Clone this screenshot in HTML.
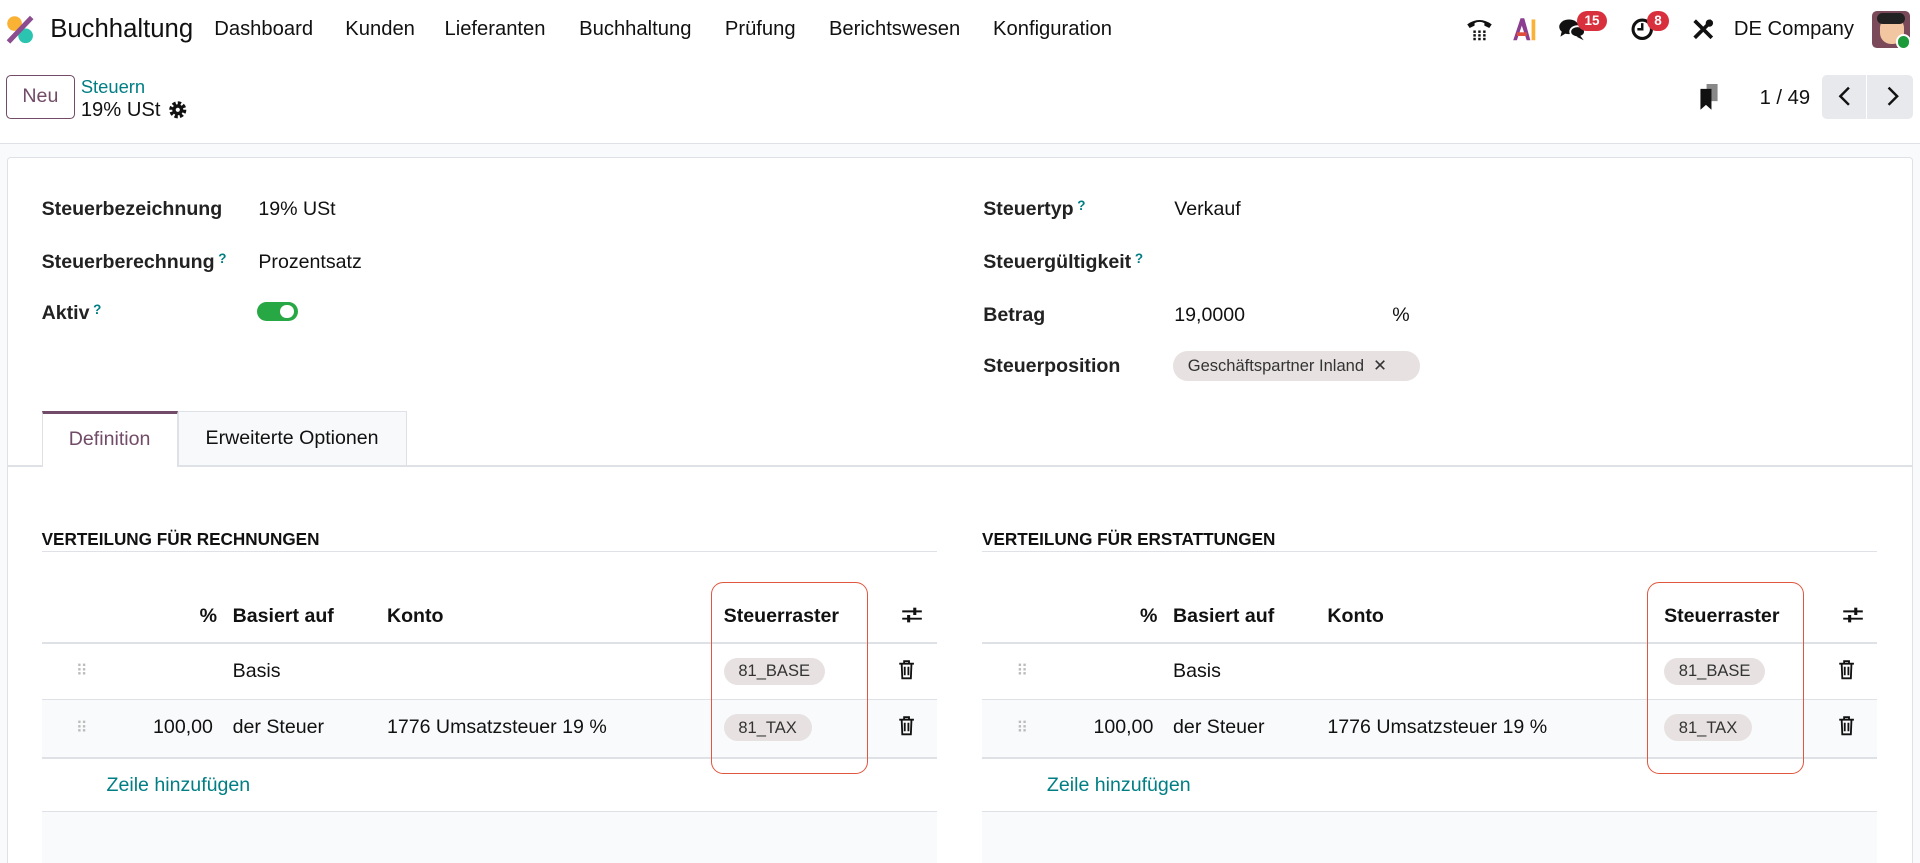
<!DOCTYPE html>
<html><head><meta charset="utf-8"><style>
*{box-sizing:border-box;margin:0;padding:0}
html,body{width:1920px;height:863px;overflow:hidden;background:#fff}
#w{zoom:1.22449;width:1568px;height:705px;position:relative;font-family:"Liberation Sans",sans-serif;color:#111;font-size:16px}
.a{position:absolute;white-space:nowrap}
.m{top:15px;font-size:16.5px}
.lbl{font-weight:bold;font-size:16px;color:#222}
.q{color:#017e84;font-size:11px;font-weight:bold;vertical-align:top;margin-left:3px}
.badge{background:#d9303e;color:#fff;font-size:11px;font-weight:bold;border-radius:9px;padding:2px 6px;top:9px}
.tag{background:#e7e1e1;border-radius:12px;font-size:13.5px;color:#333}
.hl{height:1px;background:#dee2e6}
.th{font-weight:bold;font-size:16px;top:494px}
.dh{color:#bbb;font-size:13px}
</style></head><body><div id="w">
<svg class="a" style="left:5px;top:12px" width="24" height="24" viewBox="0 0 24 24"><circle cx="7" cy="7" r="6" fill="#f9b233"/><circle cx="16" cy="17" r="6" fill="#2bc4b0"/><path d="M2 22 L21 2" stroke="#8b4d8f" stroke-width="4"/></svg>
<div class="a" style="left:41px;top:12px;font-size:21px">Buchhaltung</div>
<div class="a m" style="left:175px">Dashboard</div>
<div class="a m" style="left:282px">Kunden</div>
<div class="a m" style="left:363px">Lieferanten</div>
<div class="a m" style="left:473px">Buchhaltung</div>
<div class="a m" style="left:592px">Prüfung</div>
<div class="a m" style="left:677px">Berichtswesen</div>
<div class="a m" style="left:811px">Konfiguration</div>
<svg class="a" style="left:1197px;top:14px" width="22" height="20" viewBox="0 0 22 20"><path d="M1 6 Q11 -1 21 6 L19 9 L15 7 L15 5 Q11 3 7 5 L7 7 L3 9Z" fill="#111"/><g fill="#111"><rect x="6" y="11" width="2" height="2"/><rect x="10" y="11" width="2" height="2"/><rect x="14" y="11" width="2" height="2"/><rect x="6" y="14" width="2" height="2"/><rect x="10" y="14" width="2" height="2"/><rect x="14" y="14" width="2" height="2"/><rect x="6" y="17" width="2" height="2"/><rect x="10" y="17" width="2" height="2"/><rect x="14" y="17" width="2" height="2"/></g></svg>
<svg class="a" style="left:1235px;top:14px" width="22" height="20" viewBox="0 0 22 20"><path d="M1 19 L7 1 L10 1 L15 19 L12 19 L8 7 L4 19Z" fill="#8b3d8f"/><path d="M4 14 L12 14" stroke="#e04d3b" stroke-width="3"/><rect x="16" y="2" width="3" height="17" fill="#f9b233"/></svg>
<svg class="a" style="left:1272px;top:14px" width="24" height="20" viewBox="0 0 24 20"><ellipse cx="9" cy="8" rx="8" ry="6" fill="#111"/><path d="M3 12 L2 16 L7 13Z" fill="#111"/><ellipse cx="16" cy="12" rx="6" ry="4.5" fill="#111" stroke="#fff" stroke-width="1.5"/><path d="M18 15 L21 19 L15 16Z" fill="#111"/></svg>
<div class="a badge" style="left:1288px">15</div>
<svg class="a" style="left:1331px;top:14px" width="20" height="20" viewBox="0 0 20 20"><circle cx="10" cy="10" r="7.5" fill="none" stroke="#111" stroke-width="2.5"/><path d="M10 5 V10 H6" stroke="#111" stroke-width="2" fill="none"/></svg>
<div class="a badge" style="left:1345px">8</div>
<svg class="a" style="left:1381px;top:14px" width="20" height="20" viewBox="0 0 20 20"><path d="M3 3 L17 17 M17 3 L3 17" stroke="#111" stroke-width="3"/><circle cx="15" cy="5" r="3" fill="#111"/></svg>
<div class="a" style="left:1416px;top:15px;font-size:16.5px">DE Company</div>
<div class="a" style="left:1529px;top:9px;width:31px;height:30px;border-radius:4px;background:#7a4a5a;overflow:hidden"><div class="a" style="left:6px;top:5px;width:20px;height:22px;border-radius:9px;background:#f2c6a0"></div><div class="a" style="left:4px;top:2px;width:23px;height:9px;border-radius:5px;background:#222"></div></div>
<div class="a" style="left:1548px;top:28px;width:13px;height:13px;border-radius:7px;background:#1c9a3a;border:2px solid #fff"></div>
<div class="a" style="left:5px;top:61px;width:56px;height:36px;border:1px solid #714b67;border-radius:4px;color:#714b67;font-size:16px;text-align:center;line-height:34px">Neu</div>
<div class="a" style="left:66px;top:62px;color:#017e84;font-size:15px">Steuern</div>
<div class="a" style="left:66px;top:81px;font-size:16.5px">19% USt</div>
<svg class="a" style="left:137px;top:82px" width="16" height="16" viewBox="0 0 16 16"><circle cx="8" cy="8" r="5" fill="none" stroke="#111" stroke-width="4" stroke-dasharray="2.4 1.5"/><circle cx="8" cy="8" r="4.5" fill="#111"/><circle cx="8" cy="8" r="1.7" fill="#fff"/></svg>
<svg class="a" style="left:1387px;top:69px" width="18" height="22" viewBox="0 0 18 22"><rect x="7" y="0" width="9" height="14" fill="#888"/><path d="M2 4 H11 V21 L6.5 17 L2 21Z" fill="#111"/></svg>
<div class="a" style="left:1437px;top:71px;font-size:16.5px">1 / 49</div>
<div class="a" style="left:1488px;top:61px;width:74px;height:36px;background:#e7e9ed;border-radius:4px"></div>
<div class="a" style="left:1524px;top:61px;width:1px;height:36px;background:#fff"></div>
<svg class="a" style="left:1497px;top:69px" width="20" height="20" viewBox="0 0 20 20"><path d="M13 3 L6 10 L13 17" stroke="#111" stroke-width="2" fill="none"/></svg>
<svg class="a" style="left:1535px;top:69px" width="20" height="20" viewBox="0 0 20 20"><path d="M7 3 L14 10 L7 17" stroke="#111" stroke-width="2" fill="none"/></svg>
<div class="a" style="left:0;top:117px;width:1568px;height:600px;background:#f9fafb;border-top:1px solid #dee2e6"></div>
<div class="a" style="left:6px;top:128px;width:1556px;height:600px;background:#fff;border:1px solid #dee2e6;border-radius:3px"></div>
<div class="a lbl" style="left:34px;top:162px">Steuerbezeichnung</div>
<div class="a" style="left:211px;top:162px">19% USt</div>
<div class="a lbl" style="left:34px;top:205px">Steuerberechnung<span class="q">?</span></div>
<div class="a" style="left:211px;top:205px">Prozentsatz</div>
<div class="a lbl" style="left:34px;top:247px">Aktiv<span class="q">?</span></div>
<div class="a" style="left:210px;top:247px;width:33px;height:15px;border-radius:8px;background:#28a745"></div>
<div class="a" style="left:229px;top:249px;width:11px;height:11px;border-radius:6px;background:#fff"></div>
<div class="a lbl" style="left:803px;top:162px">Steuertyp<span class="q">?</span></div>
<div class="a" style="left:959px;top:162px">Verkauf</div>
<div class="a lbl" style="left:803px;top:205px">Steuergültigkeit<span class="q">?</span></div>
<div class="a lbl" style="left:803px;top:248px">Betrag</div>
<div class="a" style="left:959px;top:248px">19,0000</div>
<div class="a" style="left:1137px;top:248px">%</div>
<div class="a lbl" style="left:803px;top:290px">Steuerposition</div>
<div class="a tag" style="left:958px;top:287px;width:202px;height:24px;line-height:24px;padding-left:12px">Geschäftspartner Inland&nbsp; ✕</div>
<div class="a hl" style="left:6px;top:380px;width:1556px"></div>
<div class="a" style="left:145px;top:336px;width:187px;height:44px;background:#f8f9fa;border:1px solid #dee2e6;border-bottom:none;text-align:center;line-height:44px;font-size:16px">Erweiterte Optionen</div>
<div class="a" style="left:34px;top:336px;width:111px;height:45px;background:#fff;border:1px solid #dee2e6;border-top:3px solid #714b67;border-bottom:none;text-align:center;line-height:42px;font-size:16px;color:#714b67">Definition</div>
<div class="a" style="left:0;top:0">
<div class="a" style="left:34px;top:432px;font-weight:bold;font-size:14px">VERTEILUNG FÜR RECHNUNGEN</div>
<div class="a hl" style="left:34px;top:450px;width:731px"></div>
<div class="a th" style="left:163px">%</div><div class="a th" style="left:190px">Basiert auf</div><div class="a th" style="left:316px">Konto</div><div class="a th" style="left:591px">Steuerraster</div>
<svg class="a" style="left:736px;top:493px" width="18" height="18" viewBox="0 0 18 18"><path d="M1 6 H17 M1 12 H17" stroke="#111" stroke-width="1.6"/><rect x="10" y="3" width="2.5" height="6" fill="#111"/><rect x="5" y="9" width="2.5" height="6" fill="#111"/></svg>
<div class="a hl" style="left:34px;top:524px;width:731px;height:2px"></div>
<div class="a" style="left:34px;top:572px;width:731px;height:46px;background:#f9fafb"></div>
<div class="a dh" style="left:62px;top:540px">⠿</div>
<div class="a" style="left:190px;top:539px">Basis</div>
<div class="a tag" style="left:591px;top:537px;padding:3px 12px">81_BASE</div>
<div class="a hl" style="left:34px;top:571px;width:731px"></div>
<div class="a dh" style="left:62px;top:586px">⠿</div>
<div class="a" style="left:125px;top:585px">100,00</div><div class="a" style="left:190px;top:585px">der Steuer</div><div class="a" style="left:316px;top:585px">1776 Umsatzsteuer 19 %</div>
<div class="a tag" style="left:591px;top:583px;padding:3px 12px">81_TAX</div>
<div class="a hl" style="left:34px;top:618px;width:731px;height:2px"></div>
<div class="a" style="left:87px;top:632px;color:#017e84">Zeile hinzufügen</div>
<div class="a hl" style="left:34px;top:662px;width:731px"></div>
<div class="a" style="left:34px;top:663px;width:731px;height:50px;background:#f9fafb"></div>
<div class="a" style="left:581px;top:475px;width:128px;height:157px;border:1.5px solid #e0573f;border-radius:10px"></div>
</div>
<div class="a" style="left:768px;top:0">
<div class="a" style="left:34px;top:432px;font-weight:bold;font-size:14px">VERTEILUNG FÜR ERSTATTUNGEN</div>
<div class="a hl" style="left:34px;top:450px;width:731px"></div>
<div class="a th" style="left:163px">%</div><div class="a th" style="left:190px">Basiert auf</div><div class="a th" style="left:316px">Konto</div><div class="a th" style="left:591px">Steuerraster</div>
<svg class="a" style="left:736px;top:493px" width="18" height="18" viewBox="0 0 18 18"><path d="M1 6 H17 M1 12 H17" stroke="#111" stroke-width="1.6"/><rect x="10" y="3" width="2.5" height="6" fill="#111"/><rect x="5" y="9" width="2.5" height="6" fill="#111"/></svg>
<div class="a hl" style="left:34px;top:524px;width:731px;height:2px"></div>
<div class="a" style="left:34px;top:572px;width:731px;height:46px;background:#f9fafb"></div>
<div class="a dh" style="left:62px;top:540px">⠿</div>
<div class="a" style="left:190px;top:539px">Basis</div>
<div class="a tag" style="left:591px;top:537px;padding:3px 12px">81_BASE</div>
<div class="a hl" style="left:34px;top:571px;width:731px"></div>
<div class="a dh" style="left:62px;top:586px">⠿</div>
<div class="a" style="left:125px;top:585px">100,00</div><div class="a" style="left:190px;top:585px">der Steuer</div><div class="a" style="left:316px;top:585px">1776 Umsatzsteuer 19 %</div>
<div class="a tag" style="left:591px;top:583px;padding:3px 12px">81_TAX</div>
<div class="a hl" style="left:34px;top:618px;width:731px;height:2px"></div>
<div class="a" style="left:87px;top:632px;color:#017e84">Zeile hinzufügen</div>
<div class="a hl" style="left:34px;top:662px;width:731px"></div>
<div class="a" style="left:34px;top:663px;width:731px;height:50px;background:#f9fafb"></div>
<div class="a" style="left:577px;top:475px;width:128px;height:157px;border:1.5px solid #e0573f;border-radius:10px"></div>
</div>
<svg class="a" style="left:733px;top:539px" width="14" height="16" viewBox="0 0 14 16"><path d="M1 3 H13 M5 3 V1 H9 V3 M3 3 L3.5 15 H10.5 L11 3 M5.5 5.5 V12.5 M8.5 5.5 V12.5" stroke="#111" stroke-width="1.5" fill="none"/></svg>
<svg class="a" style="left:733px;top:585px" width="14" height="16" viewBox="0 0 14 16"><path d="M1 3 H13 M5 3 V1 H9 V3 M3 3 L3.5 15 H10.5 L11 3 M5.5 5.5 V12.5 M8.5 5.5 V12.5" stroke="#111" stroke-width="1.5" fill="none"/></svg>
<svg class="a" style="left:1501px;top:539px" width="14" height="16" viewBox="0 0 14 16"><path d="M1 3 H13 M5 3 V1 H9 V3 M3 3 L3.5 15 H10.5 L11 3 M5.5 5.5 V12.5 M8.5 5.5 V12.5" stroke="#111" stroke-width="1.5" fill="none"/></svg>
<svg class="a" style="left:1501px;top:585px" width="14" height="16" viewBox="0 0 14 16"><path d="M1 3 H13 M5 3 V1 H9 V3 M3 3 L3.5 15 H10.5 L11 3 M5.5 5.5 V12.5 M8.5 5.5 V12.5" stroke="#111" stroke-width="1.5" fill="none"/></svg>
</div></body></html>
